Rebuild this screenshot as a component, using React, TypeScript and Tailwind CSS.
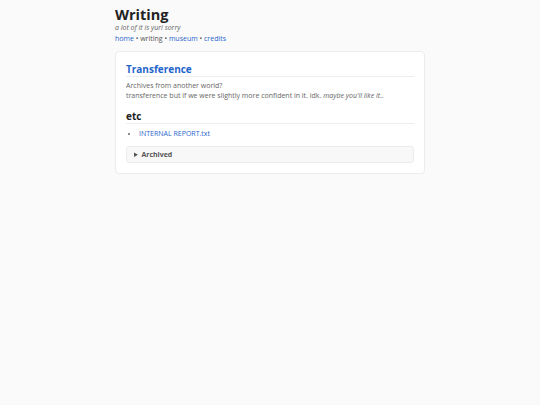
import React from 'react';

const App: React.FC = () => {
  return (
    <div className="min-h-screen bg-[#fafafa] text-[#333] font-['Open_Sans',sans-serif]">
      <div className="w-[310px] mx-auto pt-[6.5px]">
        <h1 className="text-[14.5px] leading-[16px] font-bold text-[#222]">Writing</h1>
        <p className="text-[7px] leading-[10px] italic text-[#666]">a lot of it is yuri sorry</p>
        <nav className="mt-[1.5px] text-[7px] leading-[10px] text-[#555]">
          <a className="text-[#1f66cc]">home</a> • writing • <a className="text-[#1f66cc]">museum</a> •{' '}
          <a className="text-[#1f66cc]">credits</a>
        </nav>

        <div className="mt-[7px] bg-white border border-[#ececec] rounded-[4px] px-[10px] pt-[11px] pb-[10px]">
          <h2 className="text-[10px] leading-[13px] font-bold text-[#1f66cc] border-b border-[#eee]">Transference</h2>
          <p className="mt-[4px] text-[7px] leading-[10px] text-[#666]">
            Archives from another world?
            <br />
            transference but if we were slightly more confident in it. idk. <em>maybe you'll like it..</em>
          </p>

          <h2 className="mt-[9px] text-[10px] leading-[13px] font-bold text-[#222] border-b border-[#eee]">etc</h2>
          <ul className="mt-[4.5px] pl-[13px] list-disc text-[7px] leading-[10px] marker:text-[#666]">
            <li>
              <a className="text-[#1f66cc]">INTERNAL REPORT.txt</a>
            </li>
          </ul>

          <details className="mt-[7.5px] bg-[#f8f8f8] border border-[#ececec] rounded-[3px] px-[7px] py-[2.5px]">
            <summary className="text-[7px] leading-[10px] font-bold text-[#555] cursor-pointer">Archived</summary>
          </details>
        </div>
      </div>
    </div>
  );
};

export default App;
